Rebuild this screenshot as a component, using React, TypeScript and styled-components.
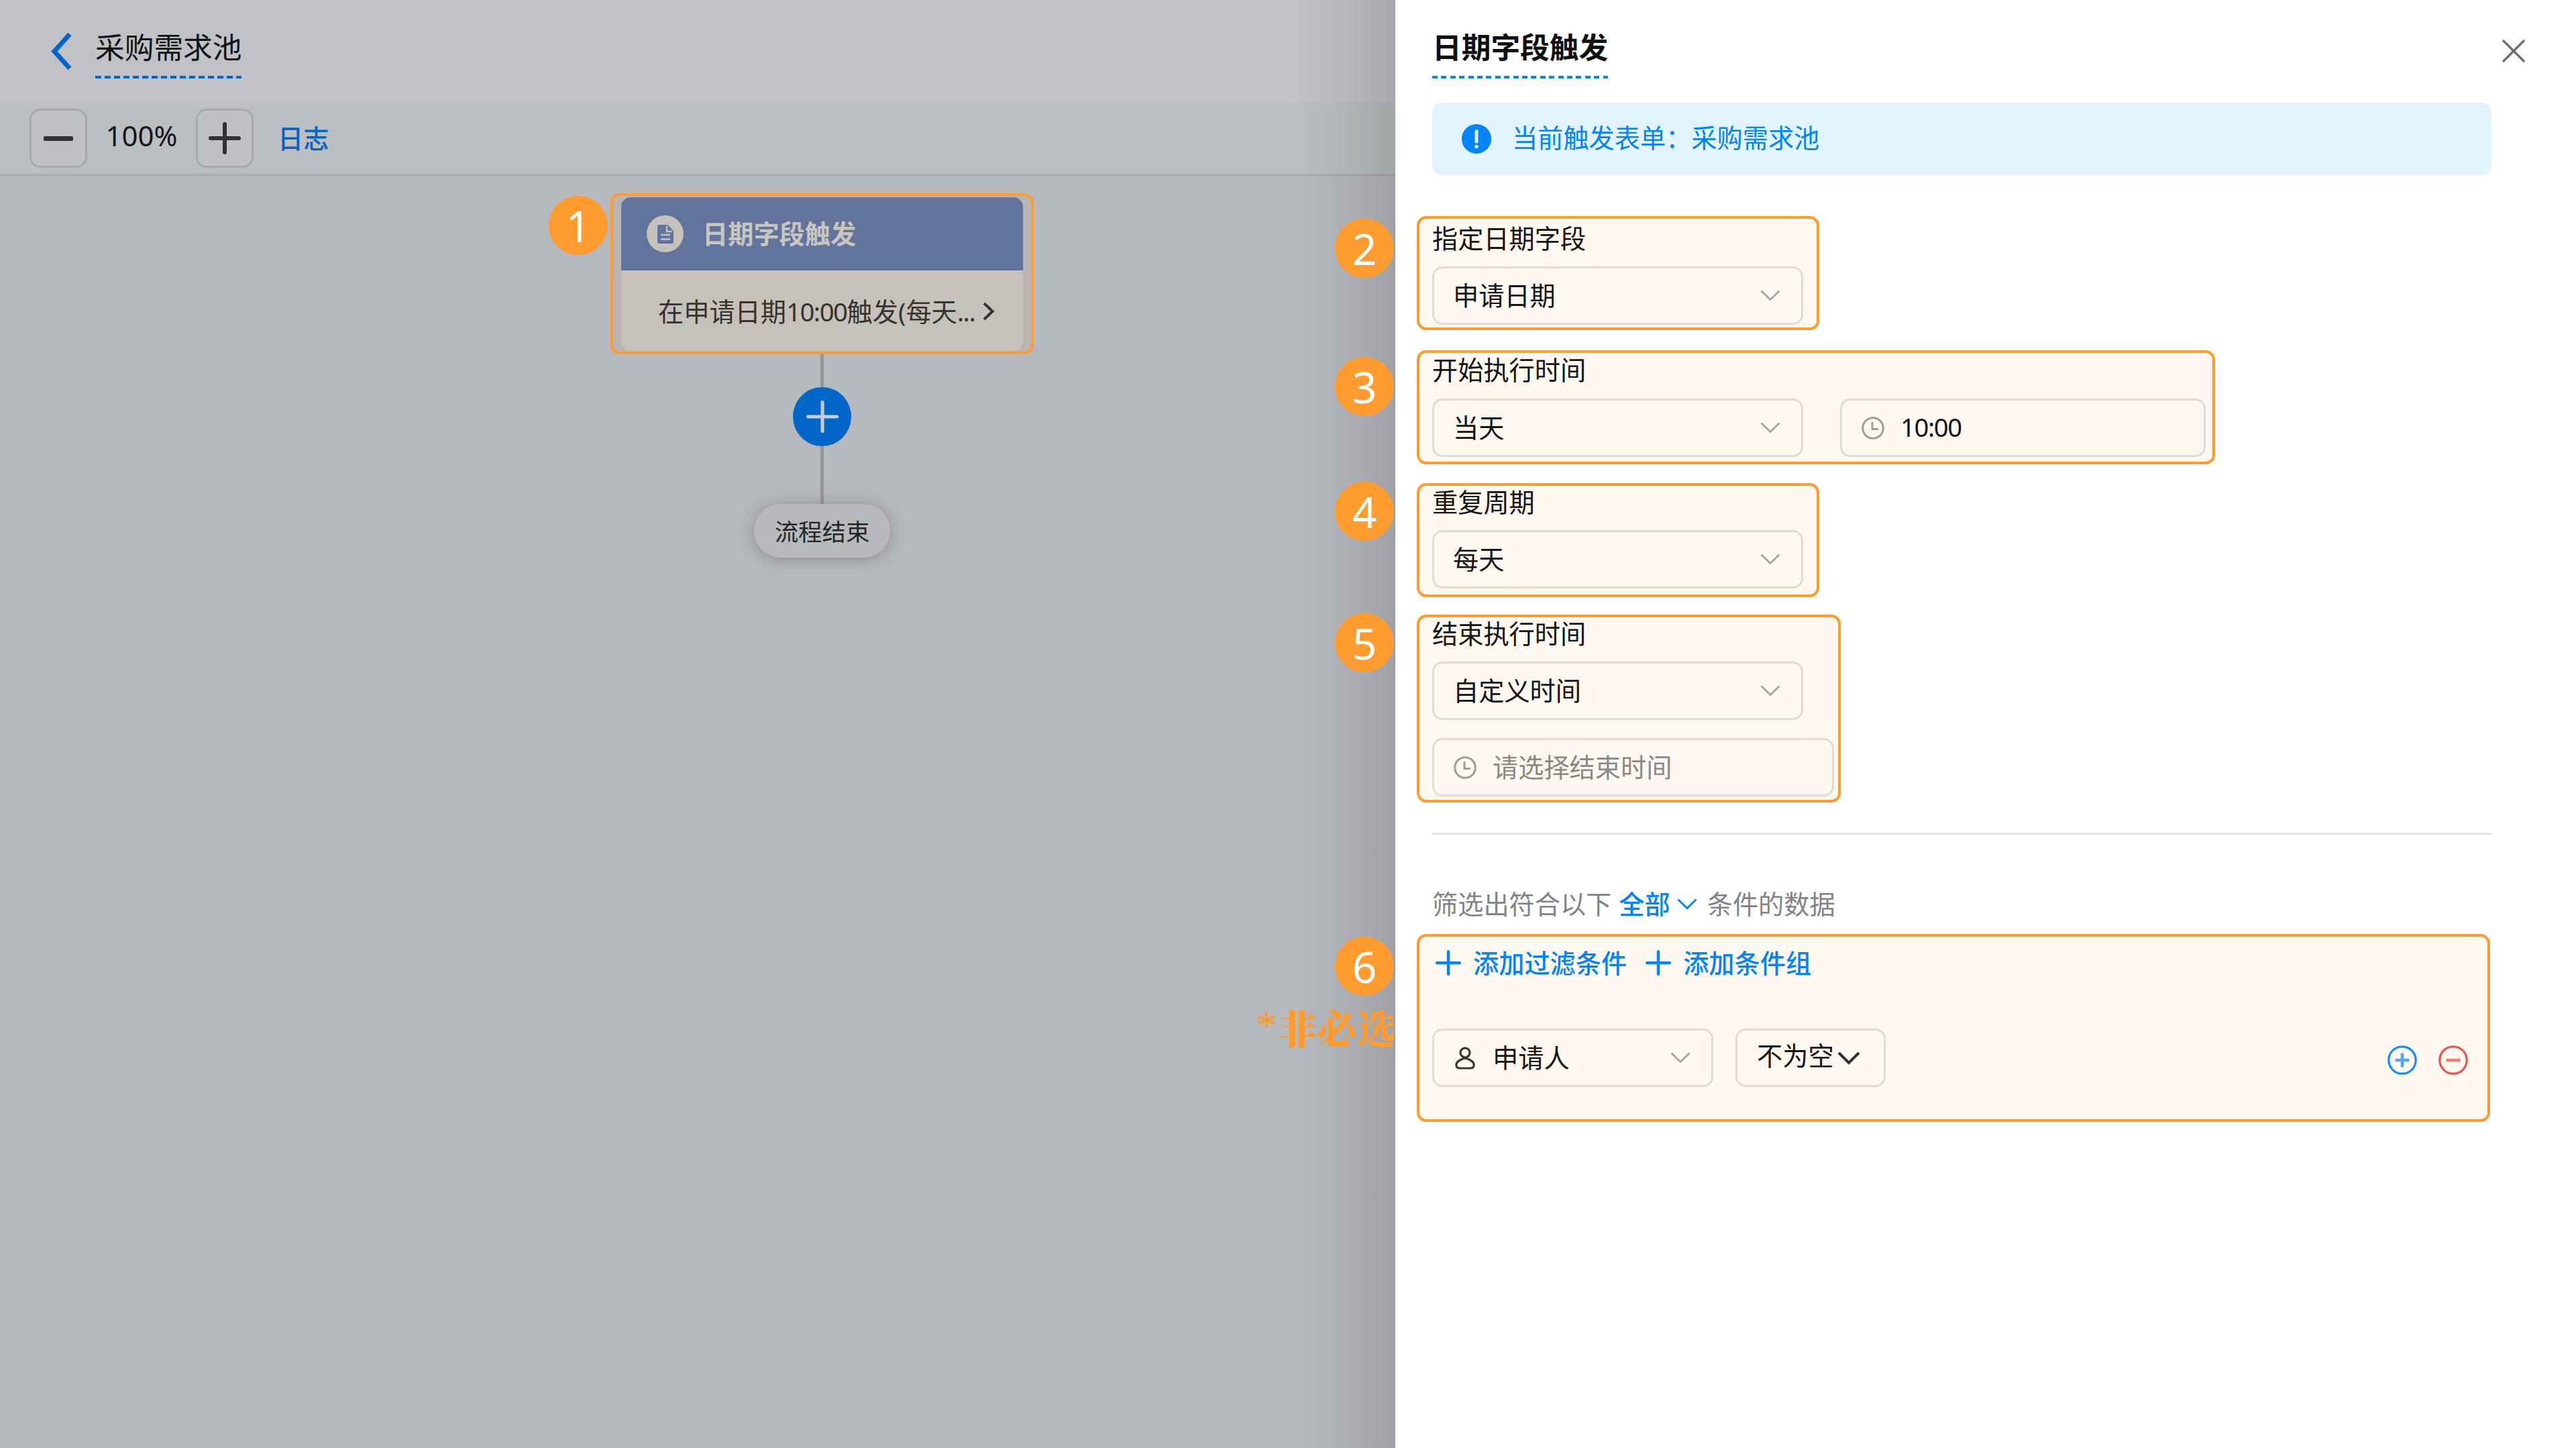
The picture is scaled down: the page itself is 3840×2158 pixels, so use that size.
import React from "react";
import styled, { createGlobalStyle } from "styled-components";

const ORANGE = "#ff9b2f";
const BLUE = "#0084ff";
const DIM_BLUE = "#0067c9";
const SANS = `"Noto Sans", "Noto Sans CJK SC", sans-serif`;

const GlobalStyle = createGlobalStyle`
  *, *::before, *::after { box-sizing: border-box; }
  body { margin: 0; font-family: ${SANS}; }
  svg { display: block; flex: none; }
`;

const Screen = styled.div`
  display: flex;
  width: 3840px;
  height: 2158px;
  overflow: hidden;
  background: #fff;
  font-size: 38.2px;
  line-height: 1;
  white-space: nowrap;
`;

/* ---------- Canvas side ---------- */

const CanvasPane = styled.main`
  position: relative;
  display: flex;
  flex-direction: column;
  width: 2080px;
  flex: none;
  background: #b6b9be;
  &::after {
    content: "";
    position: absolute;
    inset: 0 0 0 auto;
    width: 150px;
    background: linear-gradient(to right, rgba(90, 90, 90, 0), rgba(90, 90, 90, 0.1) 50%, rgba(90, 90, 90, 0.25));
  }
`;

const Header = styled.header`
  display: flex;
  align-items: flex-start;
  height: 153px;
  padding: 48px 0 0 75px;
  gap: 33px;
  background: #c1c2c6;
`;

const Dashes = styled.div<{ $color: string; $period: number; $dash: number }>`
  height: 4px;
  background: repeating-linear-gradient(
    to right,
    ${(p) => p.$color} 0 ${(p) => p.$dash}px,
    transparent ${(p) => p.$dash}px ${(p) => p.$period}px
  );
`;

const TitleBlock = styled.div<{ $bold?: boolean }>`
  display: flex;
  flex-direction: column;
  gap: 21px;
  font-size: 43.7px;
  line-height: 44px;
  font-weight: ${(p) => (p.$bold ? 700 : 400)};
  color: ${(p) => (p.$bold ? "#0e0f11" : "#111317")};
`;

const Toolbar = styled.div`
  display: flex;
  align-items: center;
  height: 110px;
  padding-left: 44px;
  background: #bbbfc1;
  border-bottom: 4px solid #abaeb2;
`;

const ZoomButton = styled.button`
  display: flex;
  align-items: center;
  justify-content: center;
  width: 86px;
  height: 88px;
  padding: 0;
  border: 3px solid #a5a9b1;
  border-radius: 16px;
  background: #c0c1c5;
`;

const ZoomValue = styled.span`
  width: 162px;
  padding-bottom: 8px;
  text-align: center;
  font-size: 42px;
  color: #14161a;
`;

const LogLink = styled.a`
  margin-left: 36px;
  font-weight: 500;
  color: ${DIM_BLUE};
`;

const Digits = styled.span`
  letter-spacing: -1.4px;
`;

const Flow = styled.section`
  display: flex;
  flex-direction: column;
  align-items: center;
  width: 631px;
  margin: 25px 0 0 910px;
`;

const TriggerFrame = styled.div`
  width: 631px;
  height: 240px;
  padding: 2px 12px 0;
  border: 4px solid ${ORANGE};
  border-radius: 14px;
  background: #bab5b3;
`;

const TriggerCard = styled.div`
  height: 229px;
  overflow: hidden;
  border-radius: 14px;
  background: #c5c1bb;
`;

const CardHead = styled.div`
  display: flex;
  align-items: center;
  height: 109px;
  padding-left: 38px;
  gap: 28px;
  background: #63749c;
  color: #c9c5bf;
  font-weight: 700;
`;

const CardIcon = styled.span`
  display: flex;
  align-items: center;
  justify-content: center;
  width: 55px;
  height: 55px;
  border-radius: 50%;
  background: #c5c1bb;
`;

const CardBody = styled.div`
  display: flex;
  align-items: center;
  height: 120px;
  padding: 2px 0 0 55px;
  gap: 12px;
  color: #35332f;
`;

const CardText = styled.span`
  width: 472px;
`;

const Connector = styled.i<{ $h: number }>`
  width: 5px;
  height: ${(p) => p.$h}px;
  background: #949699;
`;

const AddNode = styled.button`
  display: flex;
  align-items: center;
  justify-content: center;
  width: 87px;
  height: 88px;
  padding: 0;
  border: 0;
  border-radius: 50%;
  background: ${DIM_BLUE};
`;

const EndNode = styled.div`
  display: flex;
  align-items: center;
  justify-content: center;
  width: 203px;
  height: 80px;
  padding-top: 4px;
  border-radius: 40px;
  background: #b7b9bd;
  box-shadow: 0 2px 24px rgba(60, 62, 66, 0.36);
  font-size: 35.4px;
  color: #24262a;
`;

const Badge = styled.b<{ $x: number; $y: number }>`
  position: absolute;
  z-index: 2;
  left: ${(p) => p.$x}px;
  top: ${(p) => p.$y}px;
  display: flex;
  align-items: center;
  justify-content: center;
  width: 88px;
  height: 88px;
  padding-top: 1px;
  border-radius: 50%;
  background: ${ORANGE};
  color: #fff;
  font-size: 64px;
  font-weight: 400;
`;

const OptionalNote = styled.span`
  position: absolute;
  z-index: 2;
  right: -1px;
  top: 1500px;
  display: flex;
  color: ${ORANGE};
  font: 900 59px/61px "Noto Serif CJK SC", "Noto Sans CJK SC", serif;
`;

const Asterisk = styled.span`
  margin: -2px 0 0;
  font-family: "Liberation Serif", serif;
  font-size: 66px;
  font-weight: 400;
`;

/* ---------- Drawer side ---------- */

const Drawer = styled.aside`
  display: flex;
  flex-direction: column;
  width: 1760px;
  padding: 48px 126px 0 32px;
  background: #fff;
  color: #15130f;
`;

const DrawerHead = styled.div`
  display: flex;
  justify-content: space-between;
  height: 105px;
  margin-right: -51px;
  padding-left: 23px;
`;

const CloseIcon = styled.svg`
  margin-top: 10px;
`;

const Notice = styled.div`
  display: flex;
  align-items: center;
  height: 108px;
  margin-left: 23px;
  padding-left: 44px;
  gap: 31px;
  border-radius: 14px;
  background: #e0f3fe;
  color: ${BLUE};
`;

const NoticeText = styled.span`
  padding-bottom: 3px;
`;

const Marked = styled.section<{ $w: number; $h: number; $mt: number; $pt: number }>`
  display: flex;
  flex-direction: column;
  width: ${(p) => p.$w}px;
  height: ${(p) => p.$h}px;
  margin-top: ${(p) => p.$mt}px;
  padding: ${(p) => p.$pt}px 0 0 19px;
  border: 4px solid ${ORANGE};
  border-radius: 14px;
  background: #fef8f1;
`;

const Label = styled.label<{ $gap: number }>`
  height: 38px;
  margin-bottom: ${(p) => p.$gap}px;
`;

const FieldRow = styled.div<{ $gap?: number; $mt?: number }>`
  display: flex;
  align-items: center;
  gap: ${(p) => p.$gap ?? 0}px;
  margin-top: ${(p) => p.$mt ?? 0}px;
`;

const Field = styled.div<{ $w: number; $pl?: number; $pr?: number; $muted?: boolean }>`
  display: flex;
  align-items: center;
  width: ${(p) => p.$w}px;
  height: 87px;
  padding: 0 ${(p) => p.$pr ?? 31}px 0 ${(p) => p.$pl ?? 28}px;
  border: 3px solid #dedbda;
  border-radius: 15px;
  color: ${(p) => (p.$muted ? "#8b8783" : "#15130f")};
`;

const FieldText = styled.span<{ $ml?: number; $grow?: boolean; $lift?: number }>`
  margin-left: ${(p) => p.$ml ?? 0}px;
  padding-bottom: ${(p) => p.$lift ?? 0}px;
  flex: ${(p) => (p.$grow ? 1 : "none")};
`;

const Divider = styled.hr`
  width: 1579px;
  height: 3px;
  margin: 45px 0 1px 23px;
  border: 0;
  background: #dfe3e7;
`;

const MatchRule = styled.div`
  display: flex;
  align-items: center;
  height: 38px;
  margin: 83px 0 0 23px;
  color: #808387;
`;

const RuleMode = styled.span`
  display: flex;
  align-items: center;
  gap: 10px;
  margin: 0 15px 0 11px;
  font-weight: 500;
  color: ${BLUE};
`;

const AddLink = styled.a`
  display: flex;
  align-items: center;
  height: 38px;
  gap: 18px;
  font-weight: 500;
  color: ${BLUE};
`;

const RowActions = styled.div`
  display: flex;
  gap: 32px;
  margin-left: 748px;
  padding-top: 6px;
`;

const Plus = ({ size, w, color }: { size: number; w: number; color: string }) => (
  <svg width={size} height={size} viewBox={`0 0 ${size} ${size}`}>
    <path
      d={`M${w / 2} ${size / 2}H${size - w / 2}M${size / 2} ${w / 2}V${size - w / 2}`}
      stroke={color}
      strokeWidth={w}
      strokeLinecap="round"
    />
  </svg>
);

const Chevron = ({ w = 30, h = 17, sw = 3, color = "#a9a6a2" }) => (
  <svg width={w} height={h} viewBox={`0 0 ${w} ${h}`} fill="none">
    <path
      d={`M${sw / 2} ${sw / 2}L${w / 2} ${h - sw / 2 - 1}L${w - sw / 2} ${sw / 2}`}
      stroke={color}
      strokeWidth={sw}
    />
  </svg>
);

const Clock = () => (
  <svg width="34" height="34" viewBox="0 0 34 34" fill="none" stroke="#a09c97" strokeWidth="3">
    <circle cx="17" cy="17" r="15.3" />
    <path d="M16 8V18.5H25" />
  </svg>
);

const Person = () => (
  <svg width="30" height="34" viewBox="0 0 30 34" fill="none" stroke="#3a3733" strokeWidth="3.2">
    <circle cx="15" cy="8.8" r="7" />
    <path d="M15 17C8 18.500 1.800 22.500 1.800 27C1.800 30.500 4 32 7.500 32H22.500C26 32 28.200 30.500 28.200 27C28.200 22.500 22 18.500 15 17Z" />
  </svg>
);

const RoundAction = ({ color, plus }: { color: string; plus?: boolean }) => (
  <svg width="44" height="44" viewBox="0 0 44 44" fill="none" stroke={color} strokeWidth="3.2">
    <circle cx="22" cy="22" r="20.2" />
    <path
      d={plus ? "M11.500 22H32.500M22 11.500V32.500" : "M11.500 22H32.500"}
      strokeWidth="4.6"
      strokeOpacity="0.75"
    />
  </svg>
);

const Select = ({ text, w = 553 }: { text: string; w?: number }) => (
  <Field $w={w} $pl={28}>
    <FieldText $grow>{text}</FieldText>
    <Chevron />
  </Field>
);

export default function App() {
  return (
    <>
      <GlobalStyle />
      <Screen>
        <CanvasPane>
          <Header>
            <svg width="34" height="57" viewBox="0 0 34 57" fill="none">
              <path d="M29 3L6 28.500L29 54" stroke={DIM_BLUE} strokeWidth="7" />
            </svg>
            <TitleBlock>
              <span>采购需求池</span>
              <Dashes $color={DIM_BLUE} $period={14} $dash={9} />
            </TitleBlock>
          </Header>
          <Toolbar>
            <ZoomButton>
              <svg width="44" height="7" viewBox="0 0 44 7">
                <rect width="44" height="7" rx="2" fill="#303236" />
              </svg>
            </ZoomButton>
            <ZoomValue>100%</ZoomValue>
            <ZoomButton>
              <Plus size={48} w={6} color="#303236" />
            </ZoomButton>
            <LogLink>日志</LogLink>
          </Toolbar>
          <Flow>
            <TriggerFrame>
              <TriggerCard>
                <CardHead>
                  <CardIcon>
                    <svg width="24" height="28" viewBox="0 0 24 28">
                      <path d="M3 0H15L24 9V25Q24 28 21 28H3Q0 28 0 25V3Q0 0 3 0Z" fill="#63749c" />
                      <path d="M14 2V10H22M5 15H19M5 21.500H19" stroke="#c5c1bb" strokeWidth="2.400" fill="none" />
                    </svg>
                  </CardIcon>
                  日期字段触发
                </CardHead>
                <CardBody>
                  <CardText>
                    在申请日期<Digits>10:00</Digits>触发(每天<Digits>...</Digits>
                  </CardText>
                  <svg width="18" height="28" viewBox="0 0 18 28" fill="none">
                    <path d="M2 2L14.500 14L2 26" stroke="#35332f" strokeWidth="4" />
                  </svg>
                </CardBody>
              </TriggerCard>
            </TriggerFrame>
            <Connector $h={49} />
            <AddNode>
              <Plus size={48} w={5} color="#c9cdd2" />
            </AddNode>
            <Connector $h={86} />
            <EndNode>流程结束</EndNode>
          </Flow>
          <Badge $x={818} $y={292}>1</Badge>
          <Badge $x={1990} $y={326}>2</Badge>
          <Badge $x={1990} $y={532}>3</Badge>
          <Badge $x={1990} $y={718}>4</Badge>
          <Badge $x={1990} $y={914}>5</Badge>
          <Badge $x={1990} $y={1396}>6</Badge>
          <OptionalNote>
            <Asterisk>*</Asterisk>非必选
          </OptionalNote>
        </CanvasPane>

        <Drawer>
          <DrawerHead>
            <TitleBlock $bold>
              <span>日期字段触发</span>
              <Dashes $color={BLUE} $period={13.4} $dash={8} />
            </TitleBlock>
            <CloseIcon width="36" height="36" viewBox="0 0 36 36">
              <path d="M2 2L34 34M34 2L2 34" stroke="#6b6e75" strokeWidth="3.400" />
            </CloseIcon>
          </DrawerHead>
          <Notice>
            <svg width="44" height="44" viewBox="0 0 44 44">
              <circle cx="22" cy="22" r="22" fill={BLUE} />
              <path d="M22 10.500V26" stroke="#e0f3fe" strokeWidth="5" strokeLinecap="round" />
              <circle cx="22" cy="33.500" r="2.800" fill="#e0f3fe" />
            </svg>
            <NoticeText>当前触发表单：采购需求池</NoticeText>
          </Notice>

          <Marked $w={600} $h={170} $mt={61} $pt={10}>
            <Label $gap={23}>指定日期字段</Label>
            <Select text="申请日期" />
          </Marked>

          <Marked $w={1190} $h={170} $mt={30} $pt={6}>
            <Label $gap={24}>开始执行时间</Label>
            <FieldRow $gap={55}>
              <Select text="当天" />
              <Field $w={545} $pl={29}>
                <Clock />
                <FieldText $ml={24} $lift={2}>
                  <Digits>10:00</Digits>
                </FieldText>
              </Field>
            </FieldRow>
          </Marked>

          <Marked $w={600} $h={170} $mt={28} $pt={5}>
            <Label $gap={23}>重复周期</Label>
            <Select text="每天" />
          </Marked>

          <Marked $w={632} $h={280} $mt={26} $pt={5}>
            <Label $gap={23}>结束执行时间</Label>
            <Select text="自定义时间" />
            <FieldRow $mt={27}>
              <Field $w={599} $pl={29} $muted>
                <Clock />
                <FieldText $ml={24}>请选择结束时间</FieldText>
              </Field>
            </FieldRow>
          </Marked>

          <Divider />

          <MatchRule>
            筛选出符合以下
            <RuleMode>
              全部
              <Chevron color={BLUE} />
            </RuleMode>
            条件的数据
          </MatchRule>

          <Marked $w={1600} $h={280} $mt={26} $pt={20}>
            <FieldRow $gap={28}>
              <AddLink>
                <FieldText $ml={5}>
                  <Plus size={38} w={4.4} color={BLUE} />
                </FieldText>
                添加过滤条件
              </AddLink>
              <AddLink>
                <Plus size={38} w={4.4} color={BLUE} />
                添加条件组
              </AddLink>
            </FieldRow>
            <FieldRow $mt={79}>
              <Field $w={419} $pl={31}>
                <Person />
                <FieldText $ml={26} $grow>申请人</FieldText>
                <Chevron />
              </Field>
              <FieldRow $gap={33}>
                <span />
                <Field $w={224} $pl={29} $pr={0}>
                  <FieldText $lift={6}>不为空</FieldText>
                  <FieldText $ml={5}>
                    <Chevron w={34} h={20} sw={4} color="#34312d" />
                  </FieldText>
                </Field>
              </FieldRow>
              <RowActions>
                <RoundAction color="#1989fa" plus />
                <RoundAction color="#f0524a" />
              </RowActions>
            </FieldRow>
          </Marked>
        </Drawer>
      </Screen>
    </>
  );
}
